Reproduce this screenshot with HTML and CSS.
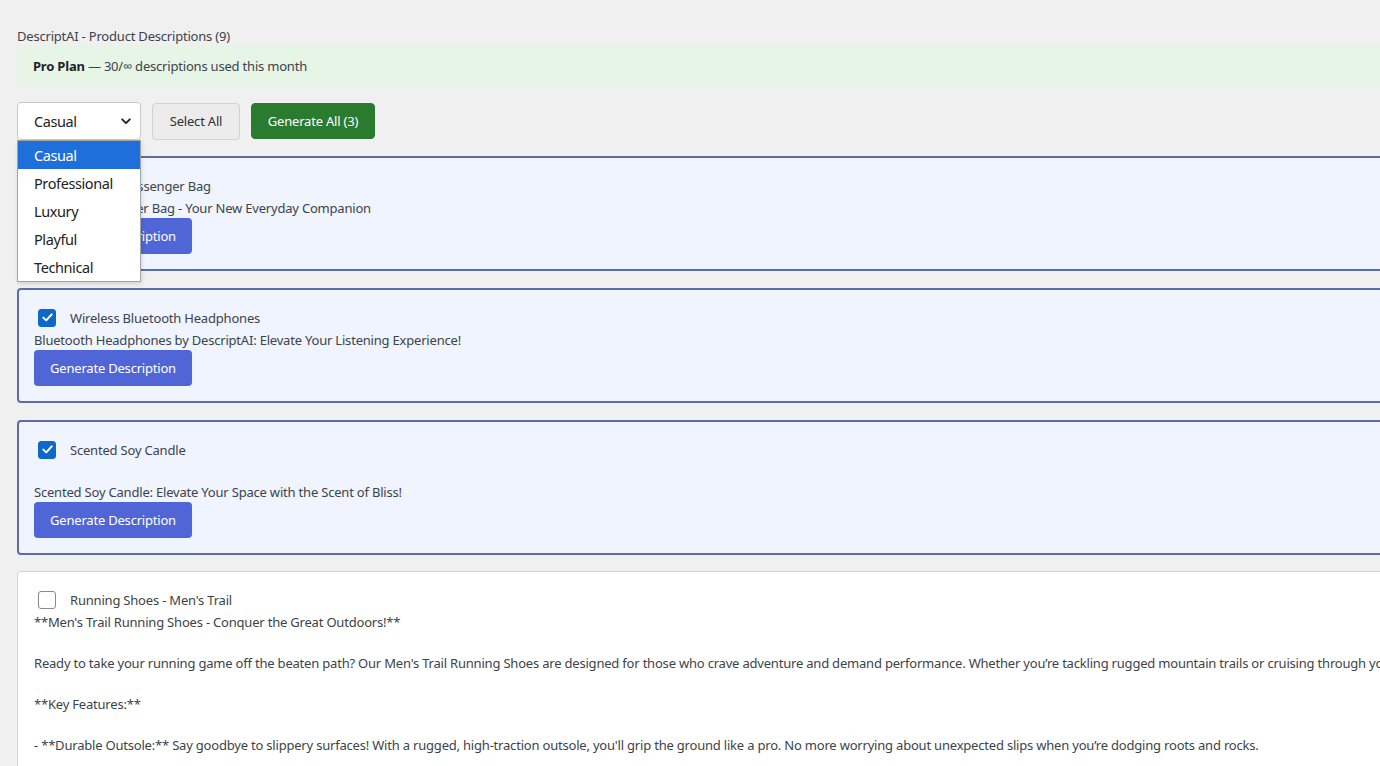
FILE: index.html
```html
<!DOCTYPE html>
<html lang="en">
<head>
<meta charset="utf-8">
<title>DescriptAI - Product Descriptions</title>
<link rel="stylesheet" href="styles.css">
</head>
<body>
<div class="wrap">
  <h1 class="title">DescriptAI - Product Descriptions (9)</h1>
  <div class="notice"><strong>Pro Plan</strong> — 30/∞ descriptions used this month</div>

  <div class="toolbar">
    <div class="select-wrap">
      <div class="select">
        <span>Casual</span>
        <svg class="chev" width="10" height="7" viewBox="0 0 10 7"><path d="M1.2 1.3 L5 5.1 L8.8 1.3" fill="none" stroke="#222" stroke-width="1.9" stroke-linecap="round" stroke-linejoin="round"/></svg>
      </div>
      <ul class="dropdown">
        <li class="active">Casual</li>
        <li>Professional</li>
        <li>Luxury</li>
        <li>Playful</li>
        <li>Technical</li>
      </ul>
    </div>
    <button class="btn btn-light">Select All</button>
    <button class="btn btn-green">Generate All (3)</button>
  </div>

  <div class="card selected">
    <div class="row">
      <span class="cb checked"><svg width="11" height="9" viewBox="0 0 11 9"><path d="M1.3 4.6 L4.2 7.4 L9.7 1.4" fill="none" stroke="#fff" stroke-width="2" stroke-linecap="round" stroke-linejoin="round"/></svg></span>
      <span class="name">Leather Messenger Bag</span>
    </div>
    <div class="desc">Leather Messenger Bag - Your New Everyday Companion</div>
    <button class="btn btn-blue">Generate Description</button>
  </div>

  <div class="card selected">
    <div class="row">
      <span class="cb checked"><svg width="11" height="9" viewBox="0 0 11 9"><path d="M1.3 4.6 L4.2 7.4 L9.7 1.4" fill="none" stroke="#fff" stroke-width="2" stroke-linecap="round" stroke-linejoin="round"/></svg></span>
      <span class="name">Wireless Bluetooth Headphones</span>
    </div>
    <div class="desc">Bluetooth Headphones by DescriptAI: Elevate Your Listening Experience!</div>
    <button class="btn btn-blue">Generate Description</button>
  </div>

  <div class="card selected">
    <div class="row">
      <span class="cb checked"><svg width="11" height="9" viewBox="0 0 11 9"><path d="M1.3 4.6 L4.2 7.4 L9.7 1.4" fill="none" stroke="#fff" stroke-width="2" stroke-linecap="round" stroke-linejoin="round"/></svg></span>
      <span class="name">Scented Soy Candle</span>
    </div>
    <div class="desc">
Scented Soy Candle: Elevate Your Space with the Scent of Bliss!</div>
    <button class="btn btn-blue">Generate Description</button>
  </div>

  <div class="card">
    <div class="row">
      <span class="cb"></span>
      <span class="name">Running Shoes - Men's Trail</span>
    </div>
    <div class="desc long">**Men's Trail Running Shoes - Conquer the Great Outdoors!**

Ready to take your running game off the beaten path? Our Men's Trail Running Shoes are designed for those who crave adventure and demand performance. Whether you’re tackling rugged mountain trails or cruising through your local park, these shoes keep you going.

**Key Features:**

- **Durable Outsole:** Say goodbye to slippery surfaces! With a rugged, high-traction outsole, you'll grip the ground like a pro. No more worrying about unexpected slips when you’re dodging roots and rocks.

- **Breathable Mesh Upper:** Keep your feet cool and dry mile after mile.</div>
    <button class="btn btn-blue">Generate Description</button>
  </div>
</div>
</body>
</html>
```

FILE: styles.css
```css
html, body {
  margin: 0;
  padding: 0;
  background: #f0f0f1;
  overflow: hidden;
}

body {
  font-family: "Noto Sans", "Open Sans", sans-serif;
  font-size: 13px;
  letter-spacing: -0.2px;
  color: #3c434a;
}

.wrap {
  width: 1520px;
  padding: 27px 0 0 17px;
}

.title {
  margin: 0;
  font-size: 13px;
  font-weight: 400;
  line-height: 18px;
  color: #3c434a;
}

.notice {
  margin-top: 0;
  background: #e7f5e6;
  padding: 12px 16px 10px;
  line-height: 19px;
  color: #3c434a;
}

.notice strong {
  font-weight: 700;
  color: #1d2327;
}

.toolbar {
  display: flex;
  align-items: center;
  gap: 11px;
  margin-top: 16px;
  height: 38px;
}

.select-wrap {
  position: relative;
  width: 124px;
  height: 38px;
}

.select {
  box-sizing: border-box;
  height: 38px;
  width: 124px;
  background: #fff;
  border: 1px solid #c9c9c9;
  border-radius: 4px;
  display: flex;
  align-items: center;
  justify-content: space-between;
  padding: 0 9px 0 16px;
  font-size: 14.5px;
  letter-spacing: -0.4px;
  color: #222;
}

.chev {
  display: block;
}

.dropdown {
  position: absolute;
  top: 38px;
  left: 0;
  z-index: 10;
  box-sizing: border-box;
  width: 124px;
  margin: 0;
  padding: 0;
  list-style: none;
  background: #fff;
  border: 1px solid #a3a3a3;
  box-shadow: 1px 2px 4px rgba(0, 0, 0, 0.12);
}

.dropdown li {
  height: 28px;
  line-height: 28px;
  padding-left: 16px;
  font-size: 14.5px;
  letter-spacing: -0.4px;
  color: #222;
}

.dropdown li.active {
  background: #1e6fd9;
  color: #fff;
}

.btn {
  font-family: inherit;
  font-size: 13px;
  letter-spacing: -0.2px;
  border-radius: 4px;
  cursor: pointer;
  line-height: 18px;
}

.btn-light {
  height: 37px;
  width: 88px;
  background: #ececec;
  border: 1px solid #d2d2d2;
  color: #2c3338;
}

.btn-green {
  height: 36px;
  width: 124px;
  background: #2a7a30;
  border: 1px solid #2a7a30;
  color: #fff;
}

.btn-blue {
  display: block;
  height: 36px;
  width: 158px;
  background: #5166d6;
  border: 0;
  color: #fff;
  padding: 0;
}

.card {
  box-sizing: border-box;
  width: 1480px;
  margin-top: 16px;
  padding: 15px 16px;
  background: #fff;
  border: 1px solid #d2d4d8;
  border-radius: 4px;
}

.card.selected {
  background: #eff4fe;
  border: 2px solid #5b6ca6;
  padding: 15px 15px;
}

.card.selected + .card.selected {
  margin-top: 17px;
}

.row {
  display: flex;
  align-items: center;
  height: 25px;
}

.cb {
  box-sizing: border-box;
  width: 18px;
  height: 18px;
  margin-left: 4px;
  margin-right: 14px;
  border: 1.5px solid #8a8a8a;
  border-radius: 3px;
  background: #fff;
  display: flex;
  align-items: center;
  justify-content: center;
}

.cb.checked {
  background: #0e68c8;
  border-color: #0e68c8;
}

.name {
  color: #3c434a;
}

.desc {
  white-space: pre;
  line-height: 20px;
  color: #3c434a;
}

.desc.long {
  line-height: 20.5px;
}
```
